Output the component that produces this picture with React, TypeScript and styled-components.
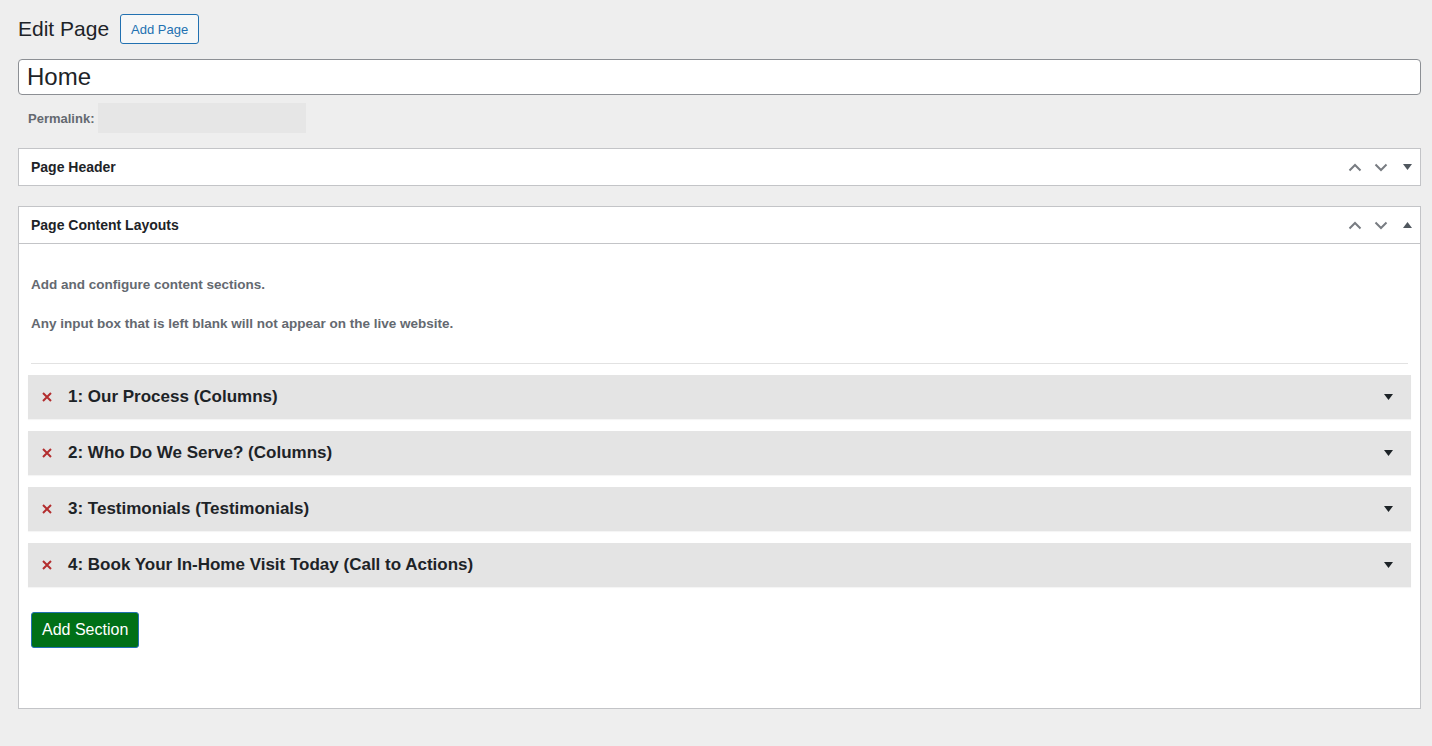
import styled, { createGlobalStyle } from "styled-components";

const GlobalStyle = createGlobalStyle`
  body {
    margin: 0;
    background: #eeeeee;
    font-family: "Liberation Sans", Arial, sans-serif;
    color: #1d2327;
  }
`;

const Wrap = styled.div`
  padding: 14px 11px 30px 18px;
`;

const TitleBar = styled.div`
  display: flex;
  align-items: center;
  gap: 11px;
  height: 30px;
`;

const Heading = styled.h1`
  margin: 0;
  font-size: 21px;
  font-weight: 400;
  color: #1d2327;
  line-height: 30px;
`;

const OutlineButton = styled.button`
  height: 30px;
  padding: 0 10px;
  font-family: inherit;
  font-size: 13px;
  color: #2271b1;
  background: #f6f7f7;
  border: 1px solid #2271b1;
  border-radius: 3px;
`;

const TitleInput = styled.div`
  margin-top: 15px;
  height: 36px;
  box-sizing: border-box;
  display: flex;
  align-items: center;
  padding: 0 8px;
  background: #fff;
  border: 1px solid #8c8f94;
  border-radius: 4px;
  font-size: 24px;
  color: #1d2327;
`;

const PermalinkRow = styled.div`
  margin-top: 8px;
  height: 30px;
  display: flex;
  align-items: center;
  padding-left: 10px;
  font-size: 13px;
  font-weight: 700;
  color: #646970;
`;

const PermalinkBlank = styled.span`
  display: block;
  width: 208px;
  height: 30px;
  margin-left: 4px;
  background: #e6e6e6;
`;

const Postbox = styled.section<{ $gap: number }>`
  margin-top: ${(p) => p.$gap}px;
  background: #fff;
  border: 1px solid #c3c4c7;
`;

const PostboxHeader = styled.div<{ $open?: boolean }>`
  height: 36px;
  display: flex;
  align-items: center;
  justify-content: space-between;
  padding-left: 12px;
  border-bottom: ${(p) => (p.$open ? "1px solid #c3c4c7" : "none")};
`;

const PostboxTitle = styled.h2`
  margin: 0;
  font-size: 14px;
  font-weight: 700;
  color: #1d2327;
`;

const Handles = styled.div`
  display: flex;
  height: 100%;
`;

const HandleButton = styled.span`
  width: 26px;
  height: 100%;
  display: flex;
  align-items: center;
  justify-content: center;
  color: #787c82;
`;

const PostboxBody = styled.div`
  padding: 31px 12px 60px;
`;

const Note = styled.p`
  margin: 0 0 19px;
  font-size: 13.5px;
  line-height: 20px;
  font-weight: 700;
  color: #646970;
`;

const Divider = styled.hr`
  margin: 29px 0 11px;
  border: 0;
  border-top: 1px solid #e2e2e2;
`;

const SectionList = styled.div`
  display: flex;
  flex-direction: column;
  gap: 12px;
  margin: 0 -3px;
`;

const SectionRow = styled.div`
  height: 44px;
  display: flex;
  align-items: center;
  padding: 0 18px 0 14px;
  background: #e4e4e4;
  box-shadow: 0 1px 1px rgba(0, 0, 0, 0.04);
`;

const RemoveMark = styled.span`
  width: 10px;
  display: flex;
  justify-content: center;
  margin-right: 16px;
  color: #b32d2e;
`;

const SectionTitle = styled.span`
  flex: 1;
  font-size: 17px;
  font-weight: 700;
  color: #1d2327;
`;

const PrimaryButton = styled.button`
  margin-top: 25px;
  height: 36px;
  padding: 0 10px;
  font-family: inherit;
  font-size: 16px;
  color: #fff;
  background: #007017;
  border: 1px solid #2271b1;
  border-radius: 3px;
`;

const ChevronUp = () => (
  <svg width="14" height="9" viewBox="0 0 14 9">
    <polyline points="1.5,7.5 7,2 12.5,7.5" fill="none" stroke="currentColor" strokeWidth="2" />
  </svg>
);

const ChevronDown = () => (
  <svg width="14" height="9" viewBox="0 0 14 9">
    <polyline points="1.5,1.5 7,7 12.5,1.5" fill="none" stroke="currentColor" strokeWidth="2" />
  </svg>
);

const Caret = ({ up, color }: { up?: boolean; color: string }) => (
  <svg width="9" height="6" viewBox="0 0 9 6">
    <polygon points={up ? "0,6 9,6 4.5,0" : "0,0 9,0 4.5,6"} fill={color} />
  </svg>
);

const Cross = () => (
  <svg width="10" height="10" viewBox="0 0 10 10">
    <path d="M1 1 L9 9 M9 1 L1 9" stroke="currentColor" strokeWidth="2" />
  </svg>
);

const sections = [
  "1: Our Process (Columns)",
  "2: Who Do We Serve? (Columns)",
  "3: Testimonials (Testimonials)",
  "4: Book Your In-Home Visit Today (Call to Actions)",
];

function BoxHandles({ open }: { open?: boolean }) {
  return (
    <Handles>
      <HandleButton><ChevronUp /></HandleButton>
      <HandleButton><ChevronDown /></HandleButton>
      <HandleButton><Caret up={open} color="#50575e" /></HandleButton>
    </Handles>
  );
}

export default function App() {
  return (
    <>
      <GlobalStyle />
      <Wrap>
        <TitleBar>
          <Heading>Edit Page</Heading>
          <OutlineButton>Add Page</OutlineButton>
        </TitleBar>
        <TitleInput>Home</TitleInput>
        <PermalinkRow>
          Permalink:
          <PermalinkBlank />
        </PermalinkRow>

        <Postbox $gap={15}>
          <PostboxHeader>
            <PostboxTitle>Page Header</PostboxTitle>
            <BoxHandles />
          </PostboxHeader>
        </Postbox>

        <Postbox $gap={20}>
          <PostboxHeader $open>
            <PostboxTitle>Page Content Layouts</PostboxTitle>
            <BoxHandles open />
          </PostboxHeader>
          <PostboxBody>
            <Note>Add and configure content sections.</Note>
            <Note>Any input box that is left blank will not appear on the live website.</Note>
            <Divider />
            <SectionList>
              {sections.map((s) => (
                <SectionRow key={s}>
                  <RemoveMark><Cross /></RemoveMark>
                  <SectionTitle>{s}</SectionTitle>
                  <Caret color="#1d2327" />
                </SectionRow>
              ))}
            </SectionList>
            <PrimaryButton>Add Section</PrimaryButton>
          </PostboxBody>
        </Postbox>
      </Wrap>
    </>
  );
}
